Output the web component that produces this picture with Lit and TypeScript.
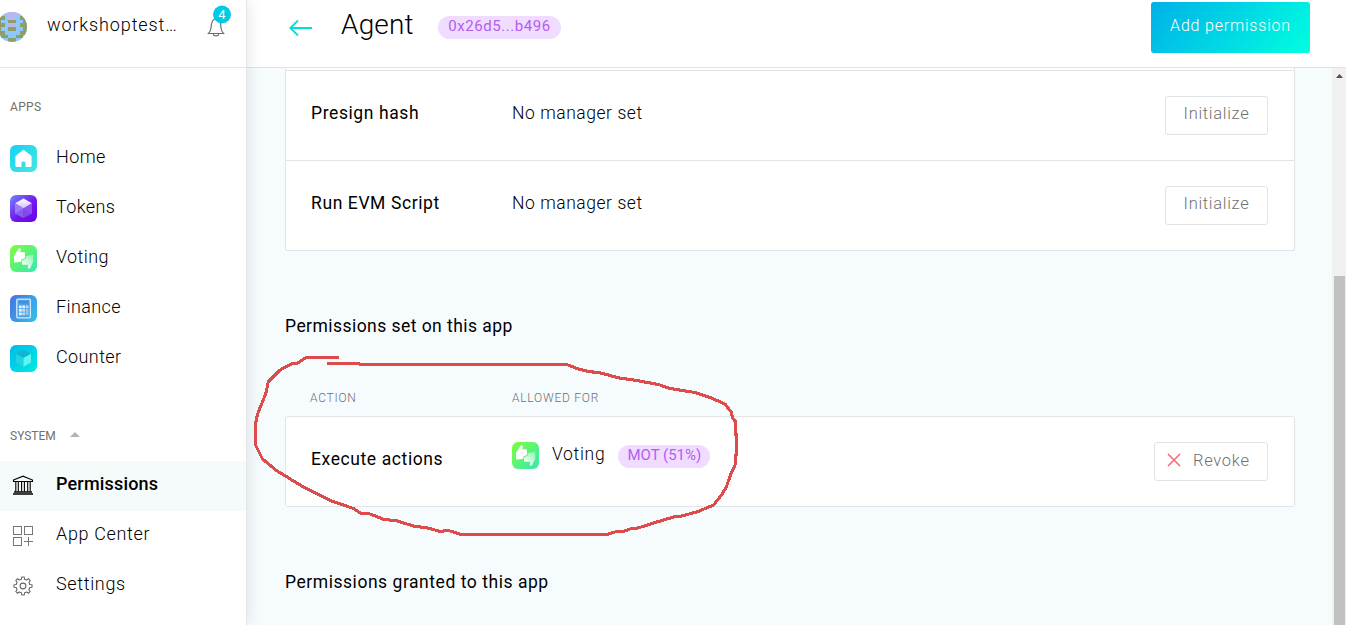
import { LitElement, html, css, svg } from "lit";
import { customElement } from "lit/decorators.js";

const votingIcon = (id: string) => html`<svg class="appicon" viewBox="0 0 27 27">
  <defs>
    <linearGradient id="${id}" x1="0" y1="0" x2="1" y2="1"><stop offset="0" stop-color="#7dff3c"/><stop offset="1" stop-color="#36e8b4"/></linearGradient>
    <linearGradient id="${id}f" x1="1" y1="0" x2="0.3" y2="1"><stop offset="0" stop-color="#fff" stop-opacity=".3"/><stop offset="1" stop-color="#fff"/></linearGradient>
  </defs>
  <rect width="27" height="27" rx="6" fill="url(#${id})"/>
  <path d="M12 15.500L15.800 13.500V11.300L22.300 9.800Q23.300 9.800 23.300 10.800V16.500L20 23.300Q18.500 24.300 17.800 22.800L18.200 19.800H13Q12 19.800 12 18.500Z" fill="url(#${id}f)"/>
  <path d="M4 10.800L8.800 3.600Q10.200 2.600 10.800 4.200L10.400 7.300H14Q15 7.300 15 8.300V12Q15 12.800 14.200 13.200L11.300 14.600V16.800L5.200 17.600Q4 17.600 4 16.400Z" fill="#fff"/>
</svg>`;

const homeIcon = html`<svg class="appicon" viewBox="0 0 27 27">
  <defs><linearGradient id="hm" x1="0" y1="0" x2="1" y2="1"><stop offset="0" stop-color="#12d2fb"/><stop offset="1" stop-color="#4be6da"/></linearGradient></defs>
  <rect width="27" height="27" rx="6" fill="url(#hm)"/>
  <path d="M13.500 4.700L21.600 11V20.500Q21.600 22 20.200 22H15.500V17.800Q15.500 16.500 13.500 16.500Q11.500 16.500 11.500 17.800V22H6.800Q5.400 22 5.400 20.500V11Z" fill="#fff"/>
</svg>`;

const tokensIcon = html`<svg class="appicon" viewBox="0 0 27 27">
  <defs>
    <linearGradient id="tk" x1="0" y1="0" x2="1" y2="1"><stop offset="0" stop-color="#6f8bff"/><stop offset=".55" stop-color="#7017ee"/><stop offset="1" stop-color="#6a00e4"/></linearGradient>
    <linearGradient id="tk2" x1="0" y1="0" x2="0" y2="1"><stop offset="0" stop-color="#fff"/><stop offset="1" stop-color="#cfc0fb"/></linearGradient>
  </defs>
  <rect width="27" height="27" rx="6" fill="url(#tk)"/>
  <path d="M13.500 3.500L22 8.300L13.500 13.500L5 8.300Z" fill="url(#tk2)"/>
  <path d="M5 8.300L13.500 13.500V23L5 18.500Z" fill="#9d7bf5"/>
  <path d="M22 8.300L13.500 13.500V23L22 18.500Z" fill="#8c52f0"/>
  <path d="M13.500 13.500L22 18.500L13.500 23L5 18.500Z" fill="#7a44ea" opacity=".6"/>
</svg>`;

const financeIcon = html`<svg class="appicon" viewBox="0 0 27 27">
  <defs><linearGradient id="fn" x1="0" y1="0" x2="1" y2=".6"><stop offset="0" stop-color="#4a6fe3"/><stop offset="1" stop-color="#34b7e8"/></linearGradient></defs>
  <rect width="27" height="27" rx="6" fill="url(#fn)"/>
  <rect x="6.800" y="4.200" width="13.600" height="18.600" rx="1" fill="#4fa2e6" stroke="#d3ebfc" stroke-width="1.300"/>
  <rect x="8.500" y="6" width="10.200" height="2.500" fill="#3f8fdf"/>
  <g fill="#e4f3fe"><rect x="9" y="10.500" width="2.700" height="2.700"/><rect x="12.300" y="10.500" width="2.700" height="2.700"/><rect x="15.700" y="10.500" width="2.700" height="2.700" opacity=".7"/>
  <rect x="9" y="14" width="2.700" height="2.700"/><rect x="12.300" y="14" width="2.700" height="2.700" opacity=".8"/><rect x="9" y="17.500" width="2.700" height="2.700"/><rect x="12.300" y="17.500" width="2.700" height="2.700" opacity=".7"/><rect x="15.700" y="14" width="2.700" height="6.200" opacity=".45"/></g>
</svg>`;

const counterIcon = html`<svg class="appicon" viewBox="0 0 27 27">
  <defs><linearGradient id="ct" x1="0" y1="0" x2="1" y2="1"><stop offset="0" stop-color="#00b9e8"/><stop offset="1" stop-color="#00ebe2"/></linearGradient></defs>
  <rect width="27" height="27" rx="6" fill="url(#ct)"/>
  <path d="M13.500 5L21 8.800L13.500 13L6 8.800Z" fill="#12b5cf"/>
  <path d="M6 8.800L13.500 13V21.800L6 17.400Z" fill="#1fd3e0"/>
  <path d="M21 8.800L13.500 13V21.800L21 17.400Z" fill="#5cf5f2"/>
</svg>`;

const bankIcon = html`<svg class="sysicon" viewBox="0 0 22 22" fill="none" stroke="#000" stroke-width="1.100">
  <path d="M1.500 5L11 1.200L20.500 5V6.500H1.500Z"/><path d="M3.800 7V16.500M6.300 7V16.500M9.600 7V16.500M12.400 7V16.500M15.700 7V16.500M18.200 7V16.500"/><path d="M2 17H20M1 19H21" stroke-width="1.500"/></svg>`;
const appsIcon = html`<svg class="sysicon" viewBox="0 0 22 22" fill="none" stroke="#777" stroke-width="1">
  <rect x="1.500" y="1.500" width="8" height="8"/><rect x="12.500" y="1.500" width="8" height="8"/><rect x="1.500" y="12.500" width="8" height="8"/><path d="M16.500 12V21M12 16.500H21"/></svg>`;

const gearPath = () => {
  const pts: string[] = [];
  for (let i = 0; i < 8; i++) {
    for (const [offset, radius] of [[-13, 7], [-8, 9.1], [8, 9.1], [13, 7]]) {
      const angle = ((i * 45 + offset) * Math.PI) / 180;
      pts.push(`${(11 + radius * Math.sin(angle)).toFixed(2)} ${(11 - radius * Math.cos(angle)).toFixed(2)}`);
    }
  }
  return `M${pts.join("L")}Z`;
};
const gearIcon = html`<svg class="sysicon" viewBox="0 0 22 22" fill="none" stroke="#666" stroke-width="1.100" stroke-linejoin="round">
  <path d="${gearPath()}"/><circle cx="11" cy="11" r="2.900"/></svg>`;

const avatarCells = [
  "obllllbo",
  "oobllboo",
  "obboobbo",
  "oobllboo",
  "obboobbo",
  "oobbbboo",
  "boobboob",
  "bbboobbb",
];
const cellColour: Record<string, string> = { o: "#8d9f66", b: "#8ec7fb", l: "#b8b8ee" };

@customElement("app-root")
export class AppRoot extends LitElement {
  static styles = css`
    :host { display: block; width: 1346px; height: 625px; overflow: hidden; position: relative; font-family: Roboto, "Noto Sans", sans-serif; color: #000; background: #fff; font-weight: 300; }
    * { box-sizing: border-box; }
    svg { display: block; flex: none; }
    .shell { display: flex; height: 625px; }
    .side { width: 247px; flex: none; border-right: 1px solid #e4e6e8; background: #fff; box-shadow: 1px 0 15px rgba(0,0,0,.1); z-index: 2; display: flex; flex-direction: column; }
    .org { height: 68px; flex: none; border-bottom: 1px solid #e4e6e6; display: flex; align-items: flex-start; }
    .avatar { width: 27px; height: 30px; margin-top: 12px; }
    .name { margin: 13px 0 0 20px; width: 160px; font-size: 18px; line-height: 24px; letter-spacing: .88px; white-space: nowrap; }
    .bell { margin-top: 5px; width: 26px; height: 34px; }
    .count { font-size: 13px; fill: #fff; font-weight: 400; }
    .label { font-size: 12px; line-height: 16px; letter-spacing: .35px; color: #707070; font-weight: 400; padding-left: 10px; }
    .apps { margin-top: 31px; }
    .list { padding-top: 18px; }
    .item { height: 50px; display: flex; align-items: center; padding-left: 10px; gap: 19px; }
    .item span { font-size: 18px; line-height: 24px; letter-spacing: .4px; margin-top: -2px; }
    .appicon { width: 27px; height: 27px; }
    .sysicon { width: 22px; height: 22px; margin: 0 3px 0 2px; }
    .system { margin-top: 45px; display: flex; align-items: center; gap: 14px; letter-spacing: 0; }
    .system svg { margin-top: -3px; }
    .sys { padding-top: 17px; }
    .sys .item span { margin-top: -4px; letter-spacing: .65px; }
    .on { background: #f5fafa; }
    .sys .on span { font-weight: 500; letter-spacing: .18px; }
    .main { flex: 1; min-width: 0; display: flex; flex-direction: column; background: #f6fbfe; }
    .bar { height: 68px; flex: none; background: #fff; border-bottom: 1px solid #e0e4e5; display: flex; align-items: flex-start; padding: 2px 36px 0 41px; }
    .back { margin-top: 15px; width: 24px; height: 22px; }
    h1 { margin: 5px 0 0 29px; width: 97px; font-size: 28px; line-height: 36px; font-weight: 300; letter-spacing: .15px; }
    .tag { height: 23px; border-radius: 12px; background: #efdcff; color: #b45cf2; font-size: 15px; line-height: 21px; text-align: center; white-space: nowrap; font-weight: 400; }
    .addr { width: 123px; margin-top: 14px; letter-spacing: .55px; }
    .mot { width: 92px; margin-left: 13px; }
    .add { margin-left: auto; width: 159px; height: 51px; border-radius: 3px; background: linear-gradient(130deg, #00b0e8, #00ffe0); color: #fff; font-size: 16px; line-height: 47px; letter-spacing: .8px; text-align: center; }
    .body { flex: 1; min-height: 0; display: flex; }
    .scroll { flex: 1; overflow: hidden; padding: 0 37px 0 38px; }
    .track { width: 14px; background: #f1f1f1; display: flex; flex-direction: column; align-items: center; padding-top: 6px; }
    .thumb { width: 11px; flex: 1; margin-top: 198px; background: #c1c1c1; }
    .card { width: 1010px; background: #fff; border: 1px solid #e1e5e6; border-radius: 3px; }
    .upper { border-top: 0; border-radius: 0 0 3px 3px; padding-top: 2px; }
    .row { display: grid; grid-template-columns: 201px 1fr auto; padding: 25px 26px 0 25px; height: 89px; }
    .upper .row { height: 90px; border-top: 1px solid #e1e5e6; }
    .row > div { display: flex; align-items: flex-start; }
    .act, .txt { font-size: 17.500px; line-height: 24px; letter-spacing: .6px; white-space: nowrap; }
    .act { font-weight: 400; padding-top: 5px; }
    .txt { letter-spacing: .55px; }
    .upper .act, .upper .txt { padding-top: 5px; }
    .btn { height: 39px; border: 1px solid #e1e4e5; border-radius: 3px; color: #707070; font-size: 16.500px; line-height: 34px; letter-spacing: .7px; background: #fff; }
    .init { width: 103px; text-align: center; }
    .revoke { width: 114px; display: flex; padding-left: 12px; gap: 12px; line-height: 36px; }
    .revoke svg { margin-top: 10px; }
    .row .txt.app { margin-left: 13px; letter-spacing: .7px; }
    .mot { margin-top: 3px; }
    h2 { margin: 0; font-size: 17.500px; line-height: 24px; font-weight: 400; letter-spacing: .45px; }
    .first { margin-top: 63px; }
    .second { margin-top: 63px; letter-spacing: .54px; }
    .heads { display: grid; grid-template-columns: 202px 1fr; padding-left: 25px; margin: 52px 0 10px; }
    .heads .label { padding: 0; letter-spacing: .75px; font-weight: 300; }
    .mark { position: absolute; left: 0; top: 0; z-index: 3; pointer-events: none; }
  `;

  item(icon: unknown, text: string, active = false) {
    return html`<div class="item ${active ? "on" : ""}">${icon}<span>${text}</span></div>`;
  }

  row(action: string) {
    return html`<div class="row"><div class="act">${action}</div><div class="txt">No manager set</div><div><div class="btn init">Initialize</div></div></div>`;
  }

  render() {
    return html`<div class="shell">
      <aside class="side">
        <div class="org">
          <svg class="avatar" viewBox="0 0 27 30"><defs><clipPath id="av"><circle cx="12" cy="15" r="15"/></clipPath></defs>
            <g clip-path="url(#av)" shape-rendering="crispEdges"><rect width="27" height="30" fill="#8ec7fb"/>
            ${avatarCells.map((line, y) => [...line].map((c, x) => svg`<rect x="${-3 + x * 3.75}" y="${y * 3.75}" width="3.750" height="3.750" fill="${cellColour[c]}"/>`))}</g></svg>
          <div class="name">workshoptest…</div>
          <svg class="bell" viewBox="0 0 26 34" fill="none"><path d="M1.500 28.500Q3.500 26.500 4 23Q4.200 14.500 9 13.500Q14 14.500 14 23Q14.500 26.500 16.500 28.500Z" stroke="#707070" stroke-width="1.200"/><path d="M6.300 29Q6.500 30.800 9 30.800T11.700 29" stroke="#707070" stroke-width="1.200"/><circle cx="15" cy="9.500" r="9" fill="#00cbe6"/><text class="count" x="15" y="14" text-anchor="middle">4</text></svg>
        </div>
        <div class="label apps">APPS</div>
        <div class="list">
          ${this.item(homeIcon, "Home")}${this.item(tokensIcon, "Tokens")}${this.item(votingIcon("vs"), "Voting")}${this.item(financeIcon, "Finance")}${this.item(counterIcon, "Counter")}
        </div>
        <div class="label system">SYSTEM<svg width="10" height="5" viewBox="0 0 10 5"><path d="M0 5L5 0L10 5Z" fill="#b3b3b3"/></svg></div>
        <div class="sys">
          ${this.item(bankIcon, "Permissions", true)}${this.item(appsIcon, "App Center")}${this.item(gearIcon, "Settings")}
        </div>
      </aside>
      <main class="main">
        <div class="bar">
          <svg class="back" viewBox="0 0 24 22" fill="none" stroke="#00dfd8" stroke-width="1.800"><path d="M24 11H2M10 3.500L2.300 11L10 18.500"/></svg>
          <h1>Agent</h1><div class="tag addr">0x26d5...b496</div>
          <div class="add">Add permission</div>
        </div>
        <div class="body">
          <div class="scroll">
            <div class="card upper">${this.row("Presign hash")}${this.row("Run EVM Script")}</div>
            <h2 class="first">Permissions set on this app</h2>
            <div class="heads"><div class="label">ACTION</div><div class="label">ALLOWED FOR</div></div>
            <div class="card"><div class="row"><div class="act">Execute actions</div>
              <div>${votingIcon("vm")}<div class="txt app">Voting</div><div class="tag mot">MOT (51%)</div></div>
              <div><div class="btn revoke"><svg width="14" height="14" viewBox="0 0 14 14" stroke="#fb6572" stroke-width="1.500"><path d="M1 1L13 13M13 1L1 13"/></svg>Revoke</div></div></div></div>
            <h2 class="second">Permissions granted to this app</h2>
          </div>
          <div class="track"><svg width="7" height="4" viewBox="0 0 7 4"><path d="M0 4L3.500 0L7 4Z" fill="#505050"/></svg><div class="thumb"></div></div>
        </div>
      </main>
    </div>
    <svg class="mark" width="1346" height="625" fill="none" stroke="#de4b4b" stroke-width="3.100" stroke-linejoin="round" shape-rendering="crispEdges">
      <path d="M339 357.300H306.700L297.500 363L291.500 364L280 370L268.300 381.700L266 393L262 403L258.500 411.500L256.500 418L255.500 425V445L262.500 459L276.500 470.500L300 485L330 500.500L353.500 508.500L360.500 513L369.500 513.800L383.500 519.300L396.500 520.800L413.500 526L426.500 527.800L440 531.300L448.500 530.500L460.500 534.300H607.300L615 532L625 531L630 529L638 528L653.500 523L673.500 517L682 516L698 511.500L713.500 505L721.500 495L726.500 486.500L731 473.500L735.500 464L736.500 446.500L735.500 421.500L732.500 418L731.500 412.500L725 404L710 397.500L695 392.500L670 388.500L658.500 384.500L636.500 380.500L618.500 377.800L600 372.800L588.500 371.500L578.500 369L566.700 364.500H360L358 363.400H327.300"/>
    </svg>`;
  }
}
